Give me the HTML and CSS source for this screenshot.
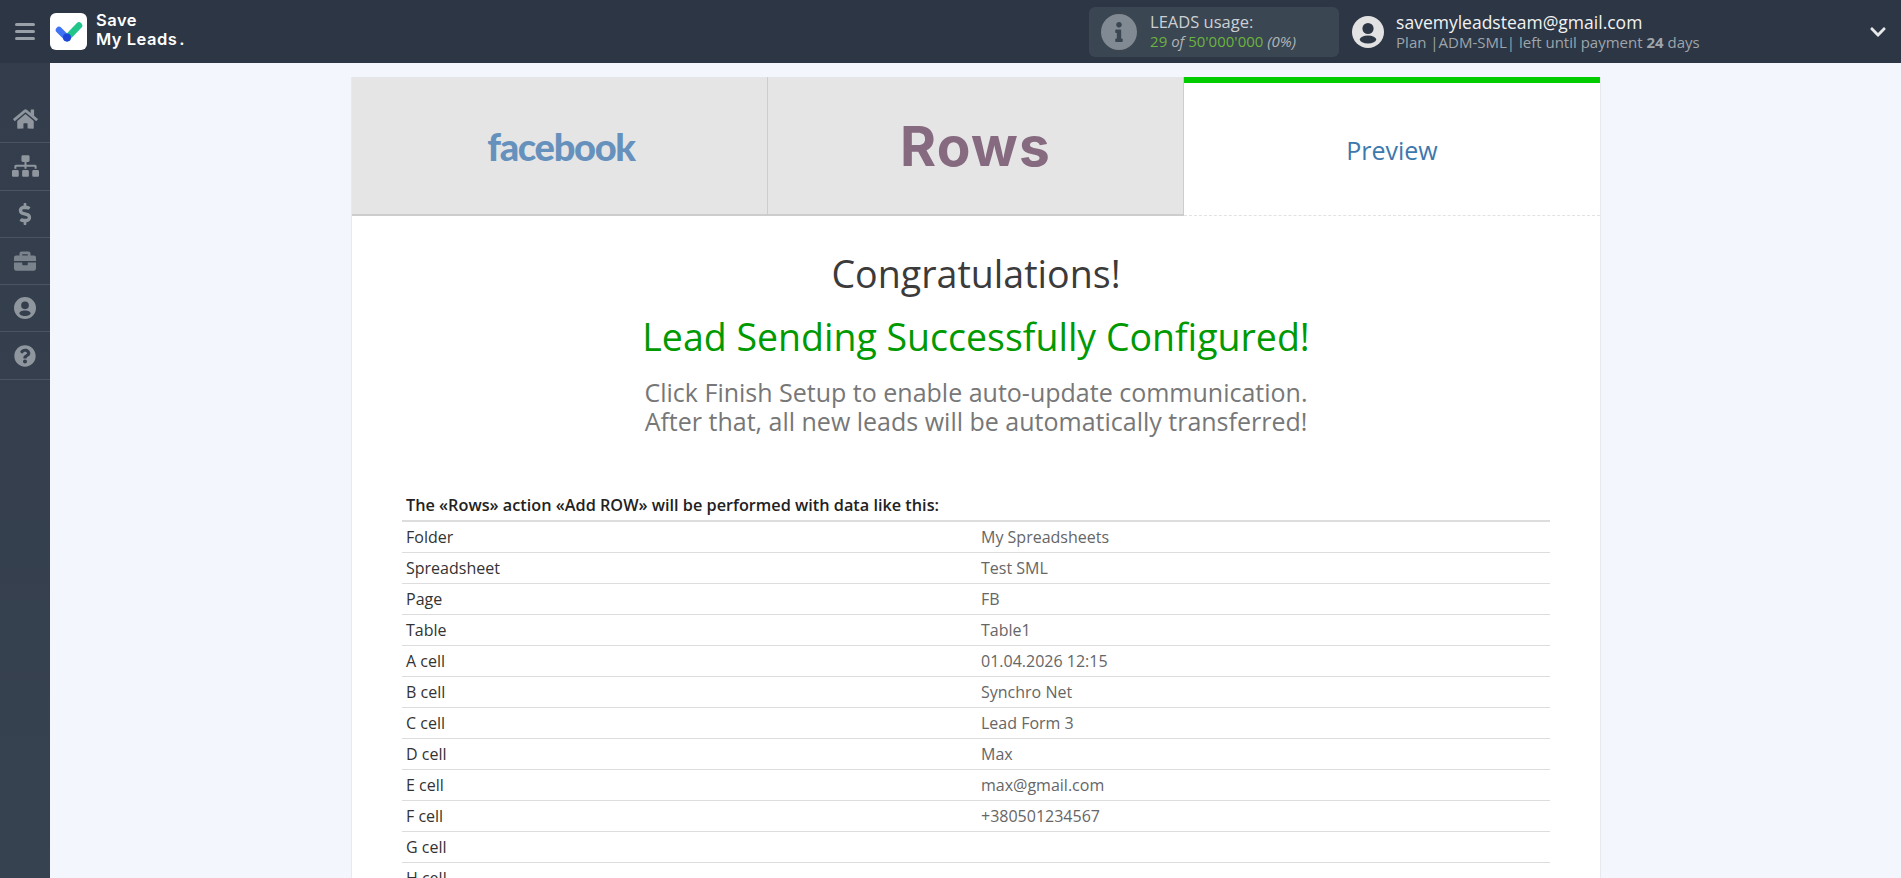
FILE: index.html
```html
<!DOCTYPE html>
<html lang="en">
<head>
<meta charset="utf-8">
<title>Save My Leads</title>
<link rel="stylesheet" href="styles.css">
</head>
<body>
<header class="topbar">
  <button class="burger" aria-label="Menu"><span></span><span></span><span></span></button>
  <div class="brand">
    <svg class="brand-mark" viewBox="0 0 37 37"><rect width="37" height="37" rx="6" fill="#fff"/><path d="M9 17l8 8" stroke="#3f73f4" stroke-width="6.5" stroke-linecap="round"/><path d="M17 25L29 12.5" stroke="#20c58a" stroke-width="6.5" stroke-linecap="round"/><circle cx="17" cy="24.5" r="4" fill="#1f45d8"/></svg>
    <div class="brand-name">Save<br>My Leads<span class="brand-dot">.</span></div>
  </div>
  <div class="usage">
    <span class="usage-icon"><svg viewBox="0 0 192 512"><path d="M20 424.229h20V279.771H20c-11.046 0-20-8.954-20-20V212c0-11.046 8.954-20 20-20h112c11.046 0 20 8.954 20 20v212.229h20c11.046 0 20 8.954 20 20V492c0 11.046-8.954 20-20 20H20c-11.046 0-20-8.954-20-20v-47.771c0-11.046 8.954-20 20-20zM96 0C56.235 0 24 32.235 24 72s32.235 72 72 72 72-32.235 72-72S135.764 0 96 0z"/></svg></span>
    <div class="usage-text">
      <div class="usage-title">LEADS usage:</div>
      <div class="usage-count"><span class="green">29</span> <i>of</i> <span class="green">50'000'000</span> <i>(0%)</i></div>
    </div>
  </div>
  <div class="account">
    <svg class="avatar" viewBox="0 0 32 32"><circle cx="16" cy="16" r="16" fill="#e2e2e2"/><circle cx="16" cy="12.5" r="5.6" fill="#2c3644"/><ellipse cx="16" cy="23.5" rx="8.2" ry="4" fill="#2c3644"/></svg>
    <div class="account-text">
      <div class="account-mail">savemyleadsteam@gmail.com</div>
      <div class="account-plan">Plan |ADM-SML| left until payment <b>24</b> days</div>
    </div>
  </div>
  <svg class="caret" viewBox="0 0 448 512"><path d="M207.029 381.476L12.686 187.132c-9.373-9.373-9.373-24.569 0-33.941l22.667-22.667c9.357-9.357 24.522-9.375 33.901-.04L224 284.505l154.745-154.021c9.379-9.335 24.544-9.317 33.901.04l22.667 22.667c9.373 9.373 9.373 24.569 0 33.941L240.971 381.476c-9.373 9.372-24.569 9.372-33.942 0z"/></svg>
</header>
<div class="shell">
  <nav class="sidebar">
    <a class="nav-item"><svg class="ic-home" viewBox="0 0 576 512"><path d="M280.37 148.26L96 300.11V464a16 16 0 0 0 16 16l112.06-.29a16 16 0 0 0 15.92-16V368a16 16 0 0 1 16-16h64a16 16 0 0 1 16 16v95.64a16 16 0 0 0 16 16.05L464 480a16 16 0 0 0 16-16V300L295.67 148.26a12.19 12.19 0 0 0-15.3 0zM571.6 251.47L488 182.56V44.05a12 12 0 0 0-12-12h-56a12 12 0 0 0-12 12v72.61L318.47 43a48 48 0 0 0-61 0L4.34 251.47a12 12 0 0 0-1.6 16.9l25.5 31A12 12 0 0 0 45.15 301l235.22-193.74a12.19 12.19 0 0 1 15.3 0L530.9 301a12 12 0 0 0 16.9-1.6l25.5-31a12 12 0 0 0-1.7-16.93z"/></svg></a>
    <a class="nav-item"><svg class="ic-map" viewBox="0 0 640 512"><path d="M128 352H32c-17.67 0-32 14.33-32 32v96c0 17.67 14.33 32 32 32h96c17.67 0 32-14.33 32-32v-96c0-17.67-14.33-32-32-32zm-24-80h192v48h48v-48h192v48h48v-57.59c0-21.17-17.23-38.41-38.41-38.41H344v-64h40c17.67 0 32-14.33 32-32V32c0-17.67-14.33-32-32-32H256c-17.67 0-32 14.33-32 32v96c0 17.67 14.33 32 32 32h40v64H94.41C73.23 224 56 241.23 56 262.41V320h48v-48zm264 80h-96c-17.67 0-32 14.33-32 32v96c0 17.67 14.33 32 32 32h96c17.67 0 32-14.33 32-32v-96c0-17.67-14.33-32-32-32zm240 0h-96c-17.67 0-32 14.33-32 32v96c0 17.67 14.33 32 32 32h96c17.67 0 32-14.33 32-32v-96c0-17.67-14.33-32-32-32z"/></svg></a>
    <a class="nav-item"><svg class="ic-std" viewBox="0 0 288 512"><path d="M209.2 233.4l-108-31.6C88.7 198.2 80 186.5 80 173.5c0-16.3 13.2-29.5 29.5-29.5h66.3c12.2 0 24.2 3.7 34.2 10.5 6.1 4.1 14.3 3.1 19.5-2l34.8-34c7.1-6.9 6.1-18.4-1.8-24.5C238 74.8 207.4 64.1 176 64V16c0-8.8-7.2-16-16-16h-32c-8.8 0-16 7.2-16 16v48h-2.5C45.8 64-5.4 118.7.5 183.6c4.2 46.1 39.4 83.6 83.8 96.6l102.5 30c12.5 3.7 21.2 15.3 21.2 28.3 0 16.3-13.2 29.5-29.5 29.5h-66.3C100 368 88 364.3 78 357.5c-6.1-4.1-14.3-3.1-19.5 2l-34.8 34c-7.1 6.9-6.1 18.4 1.8 24.5 24.5 19.2 55.1 29.9 86.5 30v48c0 8.8 7.2 16 16 16h32c8.8 0 16-7.2 16-16v-48.2c46.6-.9 90.3-28.6 105.7-72.7 21.5-61.6-14.6-124.8-72.5-141.7z"/></svg></a>
    <a class="nav-item"><svg class="ic-std dim" viewBox="0 0 512 512"><path d="M320 336c0 8.84-7.16 16-16 16h-96c-8.84 0-16-7.16-16-16v-48H0v144c0 25.6 22.4 48 48 48h416c25.6 0 48-22.4 48-48V288H320v48zm144-208h-80V80c0-25.6-22.4-48-48-48H176c-25.6 0-48 22.4-48 48v48H48c-25.6 0-48 22.4-48 48v80h512v-80c0-25.6-22.4-48-48-48zm-144 0H192V96h128v32z"/></svg></a>
    <a class="nav-item"><svg class="ic-std" viewBox="0 0 32 32"><path fill-rule="evenodd" d="M16 0a16 16 0 1 1 0 32a16 16 0 1 1 0-32zM16 6.5a5.6 5.6 0 1 0 0 11.2a5.6 5.6 0 1 0 0-11.2zM16 19.5c-4.5 0-8.2 1.8-8.2 4s3.7 4 8.2 4s8.2-1.8 8.2-4s-3.7-4-8.2-4z"/></svg></a>
    <a class="nav-item"><svg class="ic-std" viewBox="0 0 512 512"><path d="M504 256c0 136.997-111.043 248-248 248S8 392.997 8 256C8 119.083 119.043 8 256 8s248 111.083 248 248zM262.655 90c-54.497 0-89.255 22.957-116.549 63.758-3.536 5.286-2.353 12.415 2.715 16.258l34.699 26.31c5.205 3.947 12.621 3.008 16.665-2.122 17.864-22.658 30.113-35.797 57.303-35.797 20.429 0 45.698 13.148 45.698 32.958 0 14.976-12.363 22.667-32.534 33.976C247.128 238.528 216 254.941 216 296v4c0 6.627 5.373 12 12 12h56c6.627 0 12-5.373 12-12v-1.333c0-28.462 83.186-29.647 83.186-106.667 0-58.002-60.165-102-116.531-102zM256 338c-25.365 0-46 20.635-46 46 0 25.364 20.635 46 46 46s46-20.636 46-46c0-25.365-20.635-46-46-46z"/></svg></a>
  </nav>
  <main class="main">
    <section class="card">
      <div class="tabs">
        <div class="tab tab-done"><span class="logo-fb">facebook</span></div>
        <div class="tab tab-done"><span class="logo-rows">Rows</span></div>
        <div class="tab tab-active">Preview</div>
      </div>
      <div class="result">
        <h1 class="congrats">Congratulations!</h1>
        <h2 class="success">Lead Sending Successfully Configured!</h2>
        <p class="hint">Click Finish Setup to enable auto-update communication.<br>After that, all new leads will be automatically transferred!</p>
        <table class="data">
          <thead><tr><th colspan="2">The «Rows» action «Add ROW» will be performed with data like this:</th></tr></thead>
          <tbody>
            <tr><td>Folder</td><td>My Spreadsheets</td></tr>
            <tr><td>Spreadsheet</td><td>Test SML</td></tr>
            <tr><td>Page</td><td>FB</td></tr>
            <tr><td>Table</td><td>Table1</td></tr>
            <tr><td>A cell</td><td>01.04.2026 12:15</td></tr>
            <tr><td>B cell</td><td>Synchro Net</td></tr>
            <tr><td>C cell</td><td>Lead Form 3</td></tr>
            <tr><td>D cell</td><td>Max</td></tr>
            <tr><td>E cell</td><td>max@gmail.com</td></tr>
            <tr><td>F cell</td><td>+380501234567</td></tr>
            <tr><td>G cell</td><td></td></tr>
            <tr><td>H cell</td><td></td></tr>
          </tbody>
        </table>
      </div>
    </section>
  </main>
</div>
</body>
</html>
```
FILE: styles.css
```css
* { box-sizing: border-box; }
html, body { margin: 0; height: 100%; overflow: hidden; }
body { font-family: "Open Sans", "Liberation Sans", sans-serif; background: #f3f6fc; color: #333; display: flex; flex-direction: column; }

.topbar { height: 63px; flex: none; background: #2c3644; display: flex; align-items: center; }
.burger { width: 50px; height: 63px; padding: 0 15px; background: none; border: 0; display: flex; flex-direction: column; justify-content: center; gap: 4px; }
.burger span { display: block; height: 3px; border-radius: 2px; background: #9aa0a7; }
.brand { display: flex; align-items: center; gap: 9px; }
.brand-mark { width: 37px; height: 37px; display: block; }
.brand-name { font-family: Inter, "Open Sans", sans-serif; font-weight: 600; font-size: 16.5px; line-height: 19px; color: #fff; letter-spacing: .5px; margin-top: -3px; }
.brand-dot { margin-left: 2px; }

.usage { margin-left: 904px; width: 250px; height: 50px; background: #3a4651; border-radius: 6px; display: flex; align-items: center; padding-left: 12px; gap: 13px; }
.usage-icon { width: 36px; height: 36px; border-radius: 50%; background: #818a92; display: flex; align-items: center; justify-content: center; }
.usage-icon svg { height: 20px; width: 8px; fill: #3a4651; }
.usage-text { color: #ccd0d4; }
.usage-title { font-size: 16.5px; line-height: 20px; }
.usage-count { font-size: 15px; line-height: 19px; color: #b0b5ba; }
.green { color: #6cb33f; }

.account { margin-left: 13px; display: flex; align-items: center; gap: 12px; }
.avatar { width: 32px; height: 32px; display: block; }
.account-mail { font-size: 17.5px; line-height: 21px; color: #f2f2f2; }
.account-plan { font-size: 15px; line-height: 19px; color: #9fa5ab; }
.account-plan b { font-weight: 700; }
.caret { width: 16px; height: 18px; fill: #e6e8ea; margin-left: auto; margin-right: 15px; }

.shell { flex: 1; min-height: 0; display: flex; }
.sidebar { width: 50px; flex: none; background: linear-gradient(#333d4c, #374250); padding-top: 33px; }
.nav-item { height: 47.3px; display: flex; align-items: center; justify-content: center; border-bottom: 1px solid #4a5462; }
.nav-item svg { display: block; fill: #8f969e; }
.ic-home { width: 25px; height: 22px; }
.ic-map { width: 27px; height: 22px; }
.ic-std { width: 22px; height: 22px; }
.nav-item .dim { fill: #7a828c; }

.main { flex: 1; min-width: 0; padding-top: 14px; padding-left: 1px; display: flex; justify-content: center; overflow: hidden; }
.card { width: 1250px; background: #fff; border: 1px solid #e6e9ee; border-top: 0; align-self: flex-start; min-height: 900px; }

.tabs { display: grid; grid-template-columns: repeat(3, 1fr); height: 139px; }
.tab { display: flex; align-items: center; justify-content: center; }
.tab-done { background: #e5e5e5; border-right: 1px solid #cdcdcd; border-bottom: 2px solid #cdcdcd; }
.tab-active { border-top: 6px solid #00cc00; border-bottom: 1px dashed #e2e2e2; color: #3d78ad; font-size: 25px; background: #fff; padding-top: 2px; }
.logo-fb { font-family: Lato, sans-serif; font-weight: 900; font-size: 38px; letter-spacing: -1.3px; color: #6791bd; padding-left: 3px; }
.logo-rows { font-family: Inter, sans-serif; font-weight: 700; font-size: 55px; letter-spacing: 1.2px; color: #866a80; }

.result { padding: 0 50px; text-align: center; }
.congrats { margin: 32px 0 0; font-weight: 400; font-size: 37.6px; line-height: 51px; color: #3b3b3b; }
.success { margin: 12px 0 0; font-weight: 400; font-size: 37.5px; line-height: 51px; color: #009900; }
.hint { margin: 16px 0 0; font-size: 25px; line-height: 29px; color: #777; }

.data { width: 100%; margin-top: 53px; border-collapse: collapse; table-layout: fixed; text-align: left; font-size: 16px; }
.data th { padding: 0 4px; height: 32px; font-size: 16.25px; font-weight: 600; color: #222; border-bottom: 2px solid #ddd; }
.data td { height: 31px; padding: 0 4px; border-bottom: 1px solid #ddd; color: #333; }
.data td + td { color: #666; padding-left: 5px; }
```
